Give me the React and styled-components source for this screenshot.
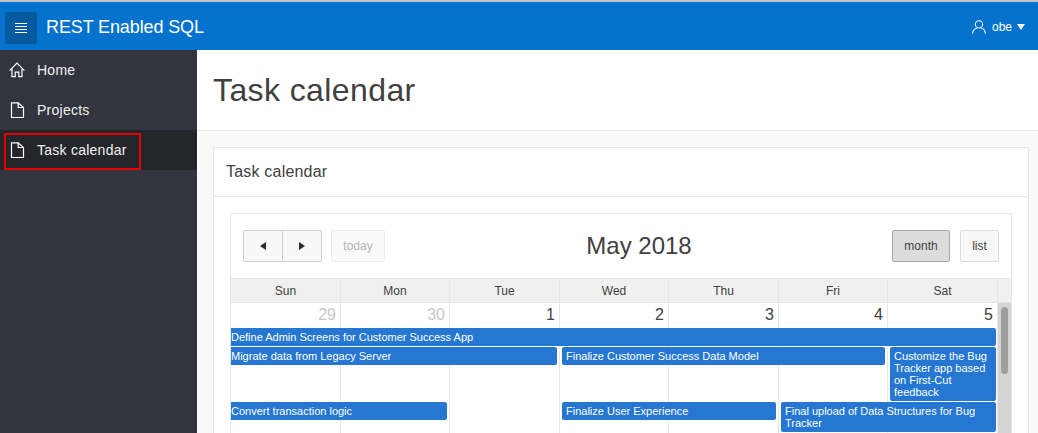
import styled, { createGlobalStyle } from "styled-components";

const GlobalStyle = createGlobalStyle`
	html, body {
		margin: 0;
		padding: 0;
		height: 100%;
		overflow: hidden;
		font-family: "Liberation Sans", Arial, sans-serif;
	}
	* {
		box-sizing: border-box;
	}
`;

const navItems = [
	{ label: "Home", icon: "home" },
	{ label: "Projects", icon: "file" },
	{ label: "Task calendar", icon: "file", active: true }
];

const days = ["Sun", "Mon", "Tue", "Wed", "Thu", "Fri", "Sat"];

const dates = [
	{ n: 29, muted: true },
	{ n: 30, muted: true },
	{ n: 1 },
	{ n: 2 },
	{ n: 3 },
	{ n: 4 },
	{ n: 5 }
];

const events = [
	{ title: "Define Admin Screens for Customer Success App", row: 1, start: 1, span: 7, cont: true },
	{ title: "Migrate data from Legacy Server", row: 2, start: 1, span: 3, cont: true },
	{ title: "Finalize Customer Success Data Model", row: 2, start: 4, span: 3 },
	{ title: "Customize the Bug Tracker app based on First-Cut feedback", row: 2, start: 7, span: 1, tall: true },
	{ title: "Convert transaction logic", row: 3, start: 1, span: 2, cont: true },
	{ title: "Finalize User Experience", row: 3, start: 4, span: 2 },
	{ title: "Final upload of Data Structures for Bug Tracker", row: 3, start: 6, span: 2 }
];

const HomeIcon = () => (
	<svg width="16" height="16" viewBox="0 0 16 16" fill="none" stroke="#fff" strokeWidth="1.2">
		<path d="M.6 8.6 8 1.2l7.4 7.4" />
		<path d="M3 6.6v8.1h3.2v-4.6h3.6v4.6H13V6.6" />
	</svg>
);

const FileIcon = () => (
	<svg width="16" height="16" viewBox="0 0 16 16" fill="none" stroke="#fff" strokeWidth="1.2">
		<path d="M2.5 .8h6.7l5.3 4.7v10.2h-12z" />
		<path d="M9.2 .8v4.7h5.3" />
	</svg>
);

const UserIcon = () => (
	<svg width="14" height="14" viewBox="0 0 14 14" fill="none" stroke="#fff" strokeWidth="1.1">
		<circle cx="7" cy="4.4" r="3.6" />
		<path d="M.6 13.6c.2-3 2.2-5 4.2-5.4M13.4 13.6c-.2-3-2.2-5-4.2-5.4" />
	</svg>
);

const App = () => {
	return (
		<Page>
			<GlobalStyle />
			<Header>
				<MenuButton>
					<svg width="12" height="10" viewBox="0 0 12 10" fill="#fff">
						<rect y="0" width="12" height="1" />
						<rect y="3" width="12" height="1" />
						<rect y="6" width="12" height="1" />
						<rect y="9" width="12" height="1" />
					</svg>
				</MenuButton>
				<AppTitle>REST Enabled SQL</AppTitle>
				<UserMenu>
					<UserIcon />
					<span>obe</span>
					<Caret />
				</UserMenu>
			</Header>
			<Body>
				<Sidebar>
					{navItems.map((item) => (
						<NavItem key={item.label} $active={item.active}>
							{item.icon === "home" ? <HomeIcon /> : <FileIcon />}
							<span>{item.label}</span>
						</NavItem>
					))}
					<Highlight />
				</Sidebar>
				<Main>
					<TitleBar>
						<h1>Task calendar</h1>
					</TitleBar>
					<Card>
						<CardHeader>Task calendar</CardHeader>
						<CardBody>
							<Calendar>
								<Toolbar>
									<ButtonGroup>
										<NavButton>
											<Arrow $dir="left" />
										</NavButton>
										<NavButton $joined>
											<Arrow $dir="right" />
										</NavButton>
									</ButtonGroup>
									<TodayButton>today</TodayButton>
									<MonthTitle>May 2018</MonthTitle>
									<ViewButton $active>month</ViewButton>
									<ViewButton>list</ViewButton>
								</Toolbar>
								<HeadRow>
									{days.map((day) => (
										<HeadCell key={day}>{day}</HeadCell>
									))}
									<HeadGutter />
								</HeadRow>
								<Scroller>
									<Weeks>
										<ColumnLines>
											{days.map((day) => (
												<ColumnLine key={day} />
											))}
										</ColumnLines>
										<WeekGrid>
											{dates.map((d) => (
												<DateCell key={d.n} $muted={d.muted}>
													{d.n}
												</DateCell>
											))}
											{events.map((ev) => (
												<EventBar
													key={ev.title}
													$row={ev.row + 1}
													$start={ev.start}
													$span={ev.span}
													$cont={ev.cont}
													$tall={ev.tall}
												>
													{ev.title}
												</EventBar>
											))}
										</WeekGrid>
									</Weeks>
									<Track>
										<Thumb />
									</Track>
								</Scroller>
							</Calendar>
						</CardBody>
					</Card>
				</Main>
			</Body>
		</Page>
	);
};

const Page = styled.div`
	display: flex;
	flex-direction: column;
	width: 1038px;
	height: 433px;
	overflow: hidden;
	border-top: 2px solid #c4c4c4;
`;

const Header = styled.header`
	display: flex;
	flex: none;
	align-items: center;
	height: 48px;
	padding: 0 13px 0 5px;
	background: #0572ce;
	color: #fff;
`;

const MenuButton = styled.div`
	display: flex;
	align-items: center;
	justify-content: center;
	width: 32px;
	height: 32px;
	margin-top: 4px;
	border-radius: 2px;
	background: #045a9f;
`;

const AppTitle = styled.div`
	margin-left: 9px;
	margin-top: 2px;
	font-size: 18px;
	line-height: 24px;
	letter-spacing: -0.12px;
`;

const UserMenu = styled.div`
	display: flex;
	align-items: center;
	margin-left: auto;
	margin-top: 2px;
	font-size: 12px;

	span {
		margin: 0 5px 0 6px;
	}
`;

const Caret = styled.i`
	width: 0;
	height: 0;
	border-left: 4px solid transparent;
	border-right: 4px solid transparent;
	border-top: 6px solid #fff;
`;

const Body = styled.div`
	display: flex;
	flex: 1;
	min-height: 0;
`;

const Sidebar = styled.nav`
	position: relative;
	flex: none;
	width: 197px;
	background: #32353d;
`;

const NavItem = styled.div`
	display: flex;
	align-items: center;
	height: 40px;
	padding-left: 9px;
	gap: 12px;
	background: ${(p) => (p.$active ? "#24262a" : "transparent")};
	color: #f2f2f2;
	font-size: 14px;
	letter-spacing: 0.25px;
`;

const Highlight = styled.div`
	position: absolute;
	top: 83px;
	left: 4px;
	width: 137px;
	height: 37px;
	border: 2px solid #e60000;
`;

const Main = styled.main`
	flex: 1;
	min-width: 0;
	background: #fafafa;
`;

const TitleBar = styled.div`
	height: 81px;
	padding: 0 16px;
	background: #fff;
	border-bottom: 1px solid #e8e8e8;

	h1 {
		margin: 0;
		padding-top: 20px;
		font-size: 32px;
		line-height: 40px;
		font-weight: 400;
		letter-spacing: 0.4px;
		color: #404040;
	}
`;

const Card = styled.section`
	margin: 16px 9px 0 16px;
	background: #fff;
	border: 1px solid #e6e6e6;
	border-bottom: none;
	border-radius: 2px 2px 0 0;
`;

const CardHeader = styled.div`
	height: 49px;
	padding: 0 12px;
	border-bottom: 1px solid #e6e6e6;
	font-size: 16px;
	line-height: 48px;
	letter-spacing: 0.2px;
	color: #404040;
`;

const CardBody = styled.div`
	padding: 16px 16px 0;
`;

const Calendar = styled.div`
	background: #fff;
	border: 1px solid #e6e6e6;
	border-bottom: none;
	border-radius: 2px 2px 0 0;
`;

const Toolbar = styled.div`
	display: flex;
	align-items: center;
	height: 64px;
	padding: 0 12px;
`;

const ButtonGroup = styled.div`
	display: flex;
`;

const NavButton = styled.div`
	display: flex;
	align-items: center;
	justify-content: center;
	width: 40px;
	height: 32px;
	margin-left: ${(p) => (p.$joined ? "-1px" : "0")};
	background: #f8f8f8;
	border: 1px solid #cfcfcf;
	border-radius: ${(p) => (p.$joined ? "0 2px 2px 0" : "2px 0 0 2px")};
`;

const Arrow = styled.i`
	width: 0;
	height: 0;
	border-top: 4px solid transparent;
	border-bottom: 4px solid transparent;
	border-left: ${(p) => (p.$dir === "right" ? "6px solid #2b2b2b" : "none")};
	border-right: ${(p) => (p.$dir === "left" ? "6px solid #2b2b2b" : "none")};
`;

const TodayButton = styled.div`
	width: 54px;
	height: 32px;
	margin-left: 9px;
	background: #fafafa;
	border: 1px solid #ececec;
	border-radius: 2px;
	color: #b5b5b5;
	font-size: 12px;
	line-height: 30px;
	text-align: center;
`;

const MonthTitle = styled.div`
	flex: 1;
	padding-left: 1px;
	text-align: center;
	font-size: 24px;
	color: #404040;
`;

const ViewButton = styled.div`
	height: 32px;
	margin-left: ${(p) => (p.$active ? "0" : "10px")};
	min-width: ${(p) => (p.$active ? "58px" : "39px")};
	background: ${(p) => (p.$active ? "#dcdcdc" : "#f8f8f8")};
	border: 1px solid ${(p) => (p.$active ? "#a8a8a8" : "#dcdcdc")};
	border-radius: 2px;
	color: #404040;
	font-size: 12px;
	line-height: 30px;
	text-align: center;
`;

const HeadRow = styled.div`
	display: grid;
	grid-template-columns: 110px 109px 110px 109px 110px 109px 110px 1fr;
	height: 25px;
	background: #f0f0f0;
	border-top: 1px solid #e6e6e6;
	border-bottom: 1px solid #e6e6e6;
`;

const HeadCell = styled.div`
	border-right: 1px solid #e6e6e6;
	font-size: 12px;
	line-height: 24px;
	text-align: center;
	color: #404040;
`;

const HeadGutter = styled.div``;

const Scroller = styled.div`
	display: flex;
	height: 130px;
	overflow: hidden;
`;

const Weeks = styled.div`
	position: relative;
	width: 767px;
	flex: none;
`;

const ColumnLines = styled.div`
	position: absolute;
	inset: 0;
	display: grid;
	grid-template-columns: 110px 109px 110px 109px 110px 109px 110px;
`;

const ColumnLine = styled.div`
	border-right: 1px solid #e6e6e6;
`;

const WeekGrid = styled.div`
	position: relative;
	display: grid;
	grid-template-columns: 110px 109px 110px 109px 110px 109px 110px;
	grid-template-rows: 24px auto auto auto;
	row-gap: 1px;
`;

const DateCell = styled.div`
	grid-row: 1;
	padding-right: 5px;
	font-size: 16px;
	line-height: 24px;
	text-align: right;
	color: ${(p) => (p.$muted ? "#c8c8c8" : "#404040")};
`;

const EventBar = styled.div`
	grid-row: ${(p) => p.$row};
	grid-column: ${(p) => p.$start} / span ${(p) => p.$span};
	align-self: start;
	height: ${(p) => (p.$tall ? "54px" : "auto")};
	margin-left: ${(p) => (p.$cont ? "0" : "2px")};
	margin-right: ${(p) => (p.$start + p.$span === 8 ? "2px" : "3px")};
	padding: 3px 1px 3px ${(p) => (p.$cont ? "0" : "4px")};
	background: #2577d1;
	border-radius: ${(p) => (p.$cont ? "0 2px 2px 0" : "2px")};
	color: #fff;
	font-size: 11px;
	line-height: 12px;
`;

const Track = styled.div`
	flex: 1;
	padding: 4px 3px 0;
	background: #d4d4d4;
`;

const Thumb = styled.div`
	height: 67px;
	border-radius: 4px;
	background: #9e9e9e;
`;

export default App;
